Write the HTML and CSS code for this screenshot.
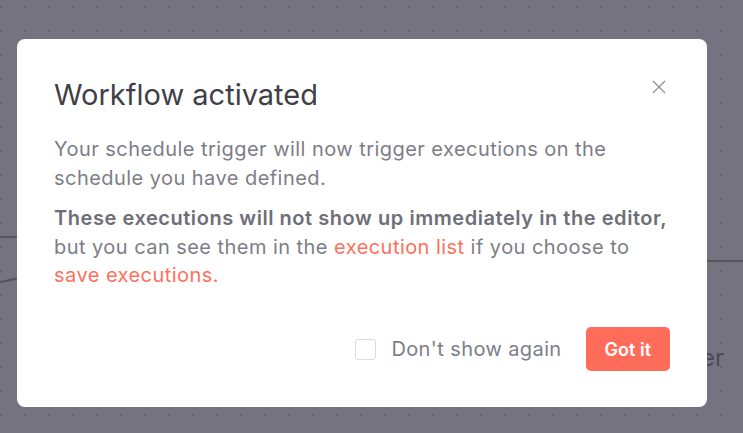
FILE: index.html
```html
<!DOCTYPE html>
<html>
    <head>
        <link rel="stylesheet" href="styles.css">
    </head>
    <body>
        <!-- workflow canvas behind the dialog -->
        <div class="canvas">
            <div class="edge edge-left"></div>
            <svg class="edge-curve" width="20" height="12" viewBox="0 0 20 12">
                <path d="M0 9 C 6 8, 12 6, 20 5" fill="none" stroke="#55535e" stroke-width="2"/>
            </svg>
            <div class="edge edge-right"></div>
            <div class="node-label">Trigger</div>
        </div>

        <div class="dialog">
            <div class="dialog-header">
                <h2 class="dialog-title">Workflow activated</h2>
                <button class="close-btn" type="button" aria-label="Close">
                    <svg width="14" height="14" viewBox="0 0 14 14">
                        <path d="M1 1 L13 13 M13 1 L1 13" stroke="#909399" stroke-width="1.4" fill="none"/>
                    </svg>
                </button>
            </div>
            <div class="dialog-body">
                <p>Your schedule trigger will now trigger executions on the schedule you have defined.</p>
                <p><b>These executions will not show up immediately in the editor,</b> but you can see them in the <a href="#">execution list</a> if you choose to <a href="#">save executions.</a></p>
            </div>
            <div class="dialog-footer">
                <label class="check">
                    <span class="check-box"></span>
                    <span>Don't show again</span>
                </label>
                <button class="primary-btn" type="button">Got it</button>
            </div>
        </div>
    </body>
</html>
```

FILE: styles.css
```css
body {
    margin: 0;
    height: 433px;
    overflow: hidden;
    position: relative;
    font-family: Inter, "Open Sans", sans-serif;
    background-color: #75737f;
    background-image: radial-gradient(circle, rgba(40, 38, 50, 0.22) 0.7px, transparent 1.1px);
    background-size: 24px 24px;
    background-position: -11px -5px;
}

.canvas {
    position: absolute;
    inset: 0;
}

.edge {
    position: absolute;
    height: 2px;
    background: #56545f;
}

.edge-left {
    left: 0;
    top: 236px;
    width: 20px;
}

.edge-curve {
    position: absolute;
    left: 0;
    top: 273px;
}

.edge-right {
    left: 700px;
    top: 260px;
    width: 43px;
}

.node-label {
    position: absolute;
    right: 19px;
    top: 343px;
    font-size: 24px;
    color: #4a4955;
    white-space: nowrap;
}

.dialog {
    position: relative;
    margin: 39px 0 0 17px;
    width: 690px;
    height: 368px;
    box-sizing: border-box;
    padding: 38px 37px 36px 37px;
    background: #fff;
    border-radius: 8px;
    display: flex;
    flex-direction: column;
}

.dialog-header {
    display: flex;
    justify-content: space-between;
    align-items: flex-start;
}

.dialog-title {
    margin: 0;
    font-size: 29px;
    line-height: 35px;
    font-weight: 400;
    color: #3f3f47;
}

.close-btn {
    border: none;
    background: none;
    padding: 0;
    margin: 3px 4px 0 0;
    cursor: pointer;
}

.dialog-body {
    margin-top: 23px;
    font-size: 20px;
    line-height: 28.5px;
    letter-spacing: 0.45px;
    color: #7d7d87;
}

.dialog-body p {
    margin: 0 0 12px 0;
}

.dialog-body b {
    font-weight: 600;
    letter-spacing: 0.55px;
    color: #6e6e78;
}

.dialog-body a {
    color: #ff6f5c;
    text-decoration: none;
}

.dialog-footer {
    margin-top: auto;
    display: flex;
    justify-content: flex-end;
    align-items: center;
    gap: 24px;
}

.check {
    display: flex;
    align-items: center;
    gap: 15px;
    font-size: 20px;
    letter-spacing: 0.4px;
    color: #7d7d87;
}

.check-box {
    width: 19px;
    height: 19px;
    border: 1px solid #d9dae5;
    border-radius: 3px;
}

.primary-btn {
    height: 44px;
    padding: 0 19px;
    border: none;
    border-radius: 5px;
    background: #ff6d5a;
    color: #fff;
    font-family: inherit;
    font-size: 18px;
    font-weight: 600;
}
```
